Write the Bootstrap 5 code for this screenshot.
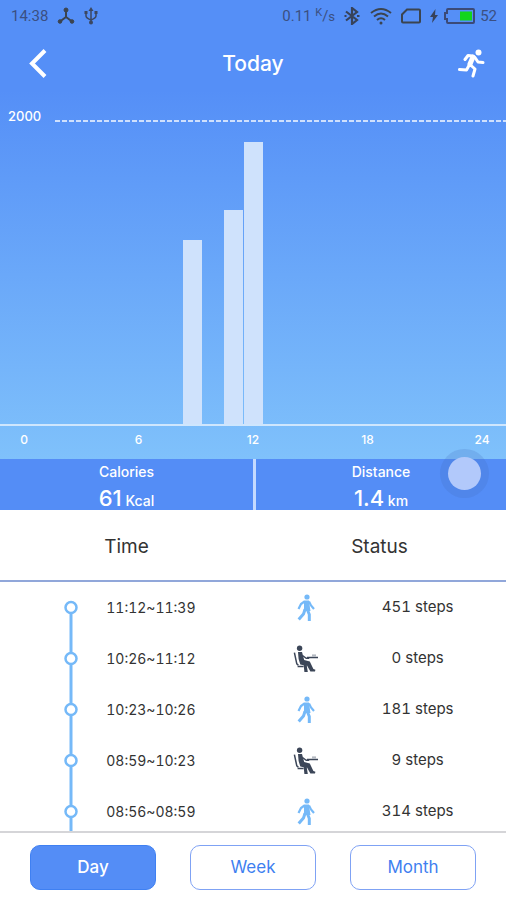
<!DOCTYPE html>
<html lang="en">
<head>
<meta charset="utf-8">
<meta name="viewport" content="width=device-width, initial-scale=1">
<title>Today</title>
<link href="https://cdn.jsdelivr.net/npm/bootstrap@5.3.0/dist/css/bootstrap.min.css" rel="stylesheet">
<style>
  :root { --brand: #548df6; --sky: #75b9f8; --ink: #3c4658; }
  body { font-family: Inter, Roboto, sans-serif; background: #fff; color: #333; }
  .screen { height: 100vh; }
  .hero { background: linear-gradient(#558ff7 90px, #7fc1fb); color: #fff; }
  .status-bar { height: 32px; padding: 0 9px 0 11px; font: 15px/32px Roboto, sans-serif; color: #3b4f82; }
  .status-bar sup { font-size: 11px; top: -5px; }
  .title-bar { height: 64px; padding: 0 20px; }
  .title-bar h1 { font-size: 21px; line-height: 64px; }
  .icon-btn { width: 36px; height: 48px; color: #fff; }
  .goal { height: 28px; padding: 12px 0 0 8px; font-size: 13px; line-height: 14px; }
  .goal-line { height: 2px; margin: 10px 0 0 14px; background: repeating-linear-gradient(90deg, #cfe0fd 0 5px, transparent 5px 7px); }
  .plot { height: 302px; border-bottom: 2px solid #cfe6fd; }
  .slot { flex: 1 1 0; padding-left: 1px; }
  .bar-fill { background: #cfe2fc; }
  .ticks { height: 33px; padding: 0 16px; font-size: 12px; line-height: 27px; }
  .ticks span { width: 16px; }
  .stats { background: var(--brand); color: #fff; height: 51px; }
  .stat + .stat { border-left: 3px solid #c5daff; }
  .stat dt { font-size: 14px; line-height: 16px; padding-top: 5px; }
  .stat dd { font-size: 14px; line-height: 24px; padding-top: 6px; }
  .stat dd b { font-size: 22px; }
  .touch { right: 25px; top: -2px; width: 33px; height: 33px; background: #b2c9fb; box-shadow: 0 0 0 8px rgba(70,110,190,.22); }
  .log { table-layout: fixed; }
  .log th { height: 71px; padding: 4px 0 0; font-size: 19px; border-bottom: 2px solid #91a7da; }
  .log td { height: 51px; padding: 0; font-size: 15px; font-variant-numeric: tabular-nums; }
  .log .span-text { font-size: 14px; }
  .c-line { width: 21%; } .c-time { width: 29%; } .c-icon { width: 21%; } .c-steps { width: 29%; }
  .log .rail { padding-left: 64px; }
  .rail svg { width: 14px; height: 51px; }
  .log .steps { padding-right: 30px; }
  .walk { color: var(--sky); } .sit { color: var(--ink); }
  .periods { border-top: 2px solid #d5d5d8; padding: 12px 30px; gap: 34px; height: 69px; }
  .period { flex: 1 1 0; height: 45px; font-size: 17px; border-radius: 10px; --bs-btn-color: #3f7ff0; --bs-btn-border-color: #7fa2f4; --bs-btn-active-bg: #548df6; --bs-btn-active-color: #fff; --bs-btn-active-border-color: #3f80f2; }
</style>
<script src="https://cdn.jsdelivr.net/npm/bootstrap@5.3.0/dist/js/bootstrap.bundle.min.js"></script>
</head>
<body>
<svg class="d-none" aria-hidden="true">
  <symbol id="i-walk" viewBox="0 0 20 28">
    <circle cx="11" cy="3" r="2.600" fill="currentColor"/>
    <path d="M8 6.500h5l1 7.500.5 3h-7l.5-3z" fill="currentColor"/>
    <path d="M8.500 7.500L5 10l-2.500 5M13 7.500l2 4 3 3.500" fill="none" stroke="currentColor" stroke-width="2.200"/>
    <path d="M9 15.500L7.500 20l-4.800 5.500M11.500 16l1.800 4.500V27" fill="none" stroke="currentColor" stroke-width="3"/>
  </symbol>
  <symbol id="i-sit" viewBox="0 0 26 28">
    <circle cx="6.600" cy="3.200" r="2.700" fill="currentColor"/>
    <path d="M5 7h4l2.200 8 5.600 1.400 3.600 7.600 2 .8-.4 1.600h-4.600L14 20.500l-.2.200 1 6.300h-3.400l-.7-6.700-3.400-.8-1.700-5.500z" fill="currentColor"/>
    <path d="M1.400 7.600l2.400 11.200 1.600 1.400M4.600 21.600h6M14 12.600h11" fill="none" stroke="currentColor" stroke-width="1.500"/>
    <path d="M9.500 10.500l3.700 2.800h3" fill="none" stroke="currentColor" stroke-width="1.400"/>
    <path d="M19 9.400h4v2.400h-4z" fill="#b5bac2"/>
  </symbol>
  <symbol id="i-dot" viewBox="0 0 14 51">
    <path d="M7 0v51" stroke="#75b9f8" stroke-width="3"/>
    <circle cx="7" cy="25.500" r="5.500" fill="#fff" stroke="#75b9f8" stroke-width="2.500"/>
  </symbol>
  <symbol id="i-first" viewBox="0 0 14 51">
    <path d="M7 25v26" stroke="#75b9f8" stroke-width="3"/>
    <circle cx="7" cy="25.500" r="5.500" fill="#fff" stroke="#75b9f8" stroke-width="2.500"/>
  </symbol>
</svg>

<div class="screen d-flex flex-column overflow-hidden">
  <header class="hero flex-shrink-0">
    <div class="status-bar d-flex align-items-center">
      <span>14:38</span>
      <svg class="ms-2" width="20" height="18" viewBox="0 0 20 18" fill="#3b4450" stroke="#3b4450"><path d="M10 3v7l-6 4.500M10 10l6 4.500" fill="none" stroke-width="2"/><circle cx="10" cy="3" r="2"/><circle cx="4" cy="14.500" r="1.800"/><circle cx="16" cy="14.500" r="1.800"/></svg>
      <svg class="ms-2" width="14" height="18" viewBox="0 0 14 18"><path d="M7 2v14M2 5v4q0 2 5 4 5-2 5-4V5" fill="none" stroke="#3b4761" stroke-width="1.500"/><path d="M7 0l2.500 4h-5zM.5 4h3v3h-3zM10.500 4h3v3h-3z" fill="#3b4761"/><circle cx="7" cy="15.500" r="2" fill="#3b4761"/></svg>
      <span class="ms-auto">0.11 <sup>K</sup>/<small>s</small></span>
      <svg class="ms-2" width="18" height="18" viewBox="0 0 18 18" fill="none" stroke="#37425a" stroke-width="2.200"><path d="M3 4.500l11 8.500-5 4V1l5 4-11 8.500M1.500 9h2M14 9h2.500"/></svg>
      <svg class="ms-2" width="24" height="20" viewBox="0 0 24 20" fill="none" stroke="#3b4450" stroke-width="2"><path d="M2 7q10-8 20 0M5 10.500q7-6 14 0M8 14q4-3.500 8 0"/><circle cx="12" cy="17" r="1.500" fill="#3b4450" stroke="none"/></svg>
      <svg class="ms-2" width="20" height="16" viewBox="0 0 20 16" fill="none" stroke="#3b4450" stroke-width="2"><path d="M6 1.500h12q1 0 1 1v11q0 1-1 1H2q-1 0-1-1V6.500z"/></svg>
      <svg class="ms-2" width="10" height="14" viewBox="0 0 10 14" fill="#37425a"><path d="M6.500 0L1 8h3L3 14l6-8H6z"/></svg>
      <svg class="ms-1" width="33" height="18" viewBox="0 0 33 18"><path d="M5 2h25q1 0 1 1v12q0 1-1 1H5q-1 0-1-1v-3H2V6h2V3q0-1 1-1z" fill="none" stroke="#3b4a78" stroke-width="2"/><path d="M17 4.500h12v9H17z" fill="#12d51c"/></svg>
      <span class="ms-1">52</span>
    </div>
    <div class="title-bar d-flex align-items-center justify-content-between">
      <button type="button" class="btn icon-btn p-0 border-0" aria-label="Back">
        <svg width="20" height="32" viewBox="0 0 20 32" fill="none" stroke="currentColor" stroke-width="4"><path d="M17 2.500L4 15.500l13 13"/></svg>
      </button>
      <h1 class="m-0 fw-medium">Today</h1>
      <button type="button" class="btn icon-btn p-0 border-0 text-end" aria-label="Activity">
        <svg width="28" height="30" viewBox="0 0 28 30" fill="none" stroke="currentColor" stroke-linecap="round" stroke-linejoin="round"><circle cx="20.500" cy="3.500" r="3" fill="currentColor" stroke="none"/><path d="M15 8l-3 7" stroke-width="5"/><path d="M14.500 7L10 6.500l-3 4M17 8.500l3 4.500 5 .5M12.500 16l4.500 4-2 7M11 16.500L8.500 21l-7-.5" stroke-width="3"/></svg>
      </button>
    </div>
    <div class="goal d-flex align-items-center fw-medium"><span>2000</span><div class="goal-line flex-fill"></div></div>
    <div class="plot d-flex align-items-end" id="plot" role="img" aria-label="Steps per hour"></div>
    <div class="ticks d-flex justify-content-between fw-medium">
      <span class="text-center">0</span><span class="text-center">6</span><span class="text-center">12</span><span class="text-center">18</span><span class="text-center">24</span>
    </div>
  </header>

  <section class="stats d-flex position-relative text-center flex-shrink-0">
    <dl class="stat w-50 m-0"><dt class="fw-medium">Calories</dt><dd class="m-0 fw-medium"><b class="fw-medium">61</b> Kcal</dd></dl>
    <dl class="stat w-50 m-0"><dt class="fw-medium">Distance</dt><dd class="m-0 fw-medium"><b class="fw-medium">1.4</b> km</dd></dl>
    <div class="touch position-absolute rounded-circle"></div>
  </section>

  <main class="flex-fill overflow-hidden">
    <table class="log w-100 text-center">
      <colgroup><col class="c-line"><col class="c-time"><col class="c-icon"><col class="c-steps"></colgroup>
      <thead><tr><th colspan="2" class="fw-normal">Time</th><th colspan="2" class="fw-normal">Status</th></tr></thead>
      <tbody>
        <tr><td class="rail text-start"><svg class="d-block"><use href="#i-first"/></svg></td><td class="span-text text-start">11:12~11:39</td><td><svg class="walk" width="20" height="28" role="img" aria-label="Walking"><use href="#i-walk"/></svg></td><td class="steps">451 steps</td></tr>
        <tr><td class="rail text-start"><svg class="d-block"><use href="#i-dot"/></svg></td><td class="span-text text-start">10:26~11:12</td><td><svg class="sit" width="26" height="28" role="img" aria-label="Sitting"><use href="#i-sit"/></svg></td><td class="steps">0 steps</td></tr>
        <tr><td class="rail text-start"><svg class="d-block"><use href="#i-dot"/></svg></td><td class="span-text text-start">10:23~10:26</td><td><svg class="walk" width="20" height="28" role="img" aria-label="Walking"><use href="#i-walk"/></svg></td><td class="steps">181 steps</td></tr>
        <tr><td class="rail text-start"><svg class="d-block"><use href="#i-dot"/></svg></td><td class="span-text text-start">08:59~10:23</td><td><svg class="sit" width="26" height="28" role="img" aria-label="Sitting"><use href="#i-sit"/></svg></td><td class="steps">9 steps</td></tr>
        <tr><td class="rail text-start"><svg class="d-block"><use href="#i-dot"/></svg></td><td class="span-text text-start">08:56~08:59</td><td><svg class="walk" width="20" height="28" role="img" aria-label="Walking"><use href="#i-walk"/></svg></td><td class="steps">314 steps</td></tr>
      </tbody>
    </table>
  </main>

  <nav class="periods d-flex flex-shrink-0" aria-label="Period">
    <button type="button" class="btn period active p-0 fw-medium" aria-pressed="true">Day</button>
    <button type="button" class="btn period p-0">Week</button>
    <button type="button" class="btn period p-0">Month</button>
  </nav>
</div>
<script>
  // Hourly steps, one slot per hour from 0 to 24; the plot's full height is 2000 steps
  const hourly = { 9: 1230, 11: 1425, 12: 1880 };
  const plot = document.getElementById('plot');
  for (let h = 0; h <= 24; h++) {
    const slot = document.createElement('div');
    slot.className = 'slot h-100 d-flex align-items-end';
    if (hourly[h]) {
      const bar = document.createElement('div');
      bar.className = 'bar-fill w-100';
      bar.style.height = hourly[h] / 20 + '%';
      slot.append(bar);
    }
    plot.append(slot);
  }
</script>
</body>
</html>
